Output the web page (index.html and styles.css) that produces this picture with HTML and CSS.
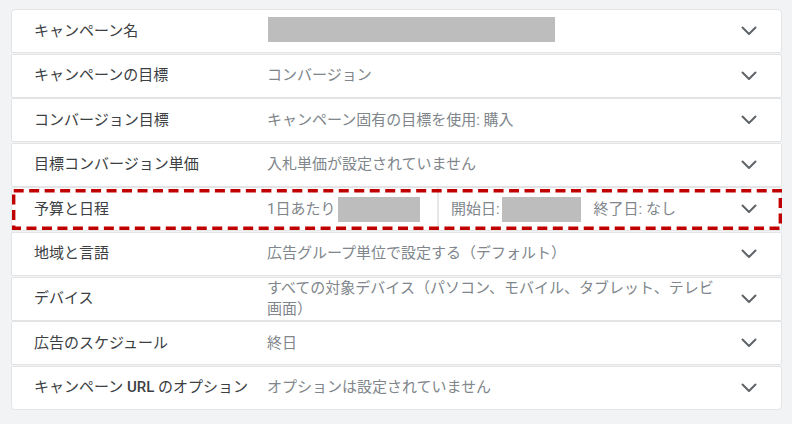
FILE: index.html
```html
<!DOCTYPE html>
<html lang="ja">
<head>
<meta charset="utf-8">
<title>キャンペーン設定</title>
<link rel="stylesheet" href="styles.css">
</head>
<body>
<div class="settings">
  <div class="row">
    <div class="label">キャンペーン名</div>
    <div class="value"><span class="mask mask-name"></span></div>
    <svg class="chev" width="16" height="10" viewBox="0 0 16 10"><polyline points="1.5,1.5 8,8 14.5,1.5"/></svg>
  </div>
  <div class="row">
    <div class="label">キャンペーンの目標</div>
    <div class="value">コンバージョン</div>
    <svg class="chev" width="16" height="10" viewBox="0 0 16 10"><polyline points="1.5,1.5 8,8 14.5,1.5"/></svg>
  </div>
  <div class="row">
    <div class="label">コンバージョン目標</div>
    <div class="value">キャンペーン固有の目標を使用: 購入</div>
    <svg class="chev" width="16" height="10" viewBox="0 0 16 10"><polyline points="1.5,1.5 8,8 14.5,1.5"/></svg>
  </div>
  <div class="row">
    <div class="label">目標コンバージョン単価</div>
    <div class="value">入札単価が設定されていません</div>
    <svg class="chev" width="16" height="10" viewBox="0 0 16 10"><polyline points="1.5,1.5 8,8 14.5,1.5"/></svg>
  </div>
  <div class="row row-highlight">
    <div class="label">予算と日程</div>
    <div class="value value-split">
      <div class="part">1日あたり<span class="mask mask-budget"></span></div>
      <div class="sep"></div>
      <div class="part">開始日:<span class="mask mask-date"></span><span class="end">終了日: なし</span></div>
    </div>
    <svg class="chev" width="16" height="10" viewBox="0 0 16 10"><polyline points="1.5,1.5 8,8 14.5,1.5"/></svg>
    <svg class="dash" viewBox="0 0 771 41" preserveAspectRatio="none"><rect x="1.7" y="1.7" width="767.6" height="37.6"/></svg>
  </div>
  <div class="row">
    <div class="label">地域と言語</div>
    <div class="value">広告グループ単位で設定する（デフォルト）</div>
    <svg class="chev" width="16" height="10" viewBox="0 0 16 10"><polyline points="1.5,1.5 8,8 14.5,1.5"/></svg>
  </div>
  <div class="row">
    <div class="label">デバイス</div>
    <div class="value">すべての対象デバイス（パソコン、モバイル、タブレット、テレビ画面）</div>
    <svg class="chev" width="16" height="10" viewBox="0 0 16 10"><polyline points="1.5,1.5 8,8 14.5,1.5"/></svg>
  </div>
  <div class="row">
    <div class="label">広告のスケジュール</div>
    <div class="value">終日</div>
    <svg class="chev" width="16" height="10" viewBox="0 0 16 10"><polyline points="1.5,1.5 8,8 14.5,1.5"/></svg>
  </div>
  <div class="row">
    <div class="label">キャンペーン <b class="latin">URL</b> のオプション</div>
    <div class="value">オプションは設定されていません</div>
    <svg class="chev" width="16" height="10" viewBox="0 0 16 10"><polyline points="1.5,1.5 8,8 14.5,1.5"/></svg>
  </div>
</div>
</body>
</html>
```

FILE: styles.css
```css
html, body {
  margin: 0;
  padding: 0;
  background: #f1f3f4;
}

body {
  font-family: Roboto, "Noto Sans CJK JP", sans-serif;
  font-size: 15px;
  line-height: 21px;
}

.settings {
  display: flex;
  flex-direction: column;
  gap: 0.6px;
  width: 771px;
  margin: 9px 0 0 11px;
}

.row {
  position: relative;
  display: flex;
  align-items: center;
  box-sizing: border-box;
  min-height: 44px;
  padding: 0 24px 0 22px;
  background: #ffffff;
  border: 1px solid #e3e4e6;
  border-radius: 2px;
}

.row:first-child {
  border-radius: 4px 4px 2px 2px;
}

.row:last-child {
  border-radius: 2px 2px 4px 4px;
}

.label {
  flex: none;
  width: 233px;
  color: #3c4043;
  white-space: nowrap;
}

.latin {
  font-weight: 500;
}

.value {
  flex: 1;
  min-width: 0;
  padding-right: 16px;
  color: #80868b;
}

.mask {
  display: inline-block;
  background: #bdbdbd;
  vertical-align: middle;
}

.mask-name {
  width: 287px;
  height: 25px;
  margin-left: 1px;
  margin-top: -4px;
}

.value-split {
  align-self: stretch;
  display: flex;
  align-items: center;
}

.part {
  display: flex;
  align-items: center;
  white-space: nowrap;
}

.mask-budget {
  width: 82px;
  height: 25px;
  margin-left: 3px;
}

.sep {
  align-self: stretch;
  width: 1.5px;
  margin: 0 12px 0 17px;
  background: #e6e7e9;
}

.mask-date {
  width: 79px;
  height: 25px;
  margin-left: 2px;
}

.end {
  margin-left: 13px;
}

.chev {
  flex: none;
  display: block;
}

.chev polyline {
  fill: none;
  stroke: #5f6368;
  stroke-width: 2;
  stroke-linecap: round;
  stroke-linejoin: round;
}

.dash {
  position: absolute;
  left: 0;
  right: -1px;
  top: 0.6px;
  height: 41px;
  width: 770px;
  pointer-events: none;
}

.dash rect {
  fill: none;
  stroke: #c00000;
  stroke-width: 3.4;
  stroke-dasharray: 10 5.5;
}
```
